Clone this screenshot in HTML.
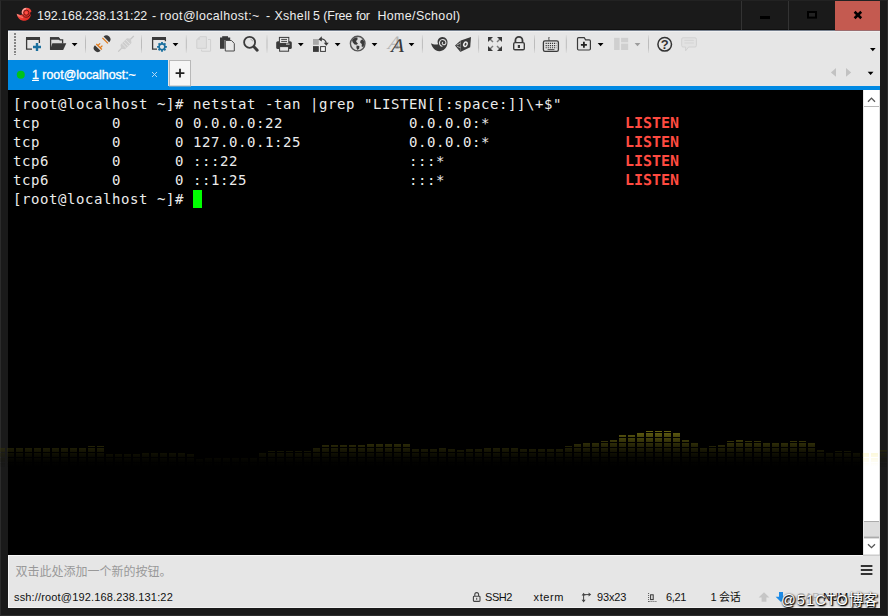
<!DOCTYPE html>
<html><head><meta charset="utf-8"><title>Xshell</title>
<style>
html,body{margin:0;padding:0;}
body{width:888px;height:616px;position:relative;overflow:hidden;background:#1a1a1a;font-family:"Liberation Sans","Noto Sans CJK SC",sans-serif;}
.abs{position:absolute;}
#frame{left:0;top:0;width:886px;height:614px;border:1px solid #2b2b2b;border-top-color:#222;}
#title i{font-style:normal}
#title i:nth-of-type(1){margin-left:.9px}#title i:nth-of-type(2){margin-left:-.3px}#title i:nth-of-type(3){margin-left:2.6px}#title i:nth-of-type(5){margin-left:-1.2px}#title i:nth-of-type(6){margin-left:-.8px;letter-spacing:-.2px}#title i:nth-of-type(7){margin-left:0.3px;letter-spacing:-.3px}#title i:nth-of-type(8){margin-left:4px}
#title .ls{letter-spacing:0.38px}
#title{left:37px;top:8px;height:16px;line-height:16px;font-size:12.4px;color:#ededed;white-space:nowrap;}
.wbtn{top:1px;height:29px;}
#client{left:8px;top:30px;width:872px;height:578px;background:#e6e6e6;}
#toolbar{left:8px;top:30px;width:872px;height:30px;background:#e6e6e6;}
#tabbar{left:8px;top:60px;width:872px;height:30px;background:#e6e6e6;}
#tab{left:8px;top:60px;width:160px;height:30px;background:#0089e3;}
#tabline{left:8px;top:86px;width:872px;height:4px;background:#0089e3;}
#tabtxt{left:32px;top:67px;font-size:12.4px;line-height:16px;color:#fff;white-space:nowrap;-webkit-text-stroke:0.35px #fff;letter-spacing:0}
#term{left:8px;top:90px;width:855px;height:465px;background:#000;}
#tt{left:13px;top:95px;font-family:"DejaVu Sans Mono","Liberation Mono",monospace;font-size:14px;line-height:19px;color:#ececec;white-space:pre;letter-spacing:0.5713px;margin:0;}
#tt b{color:#ff4a40;font-weight:bold;font-size:15px;letter-spacing:-0.03px;display:inline-block;width:54px;height:19px;line-height:19px;vertical-align:top;text-rendering:geometricPrecision;}
#cursor{left:193px;top:190px;width:9px;height:18px;background:#00ff00;}
#sb{left:863px;top:90px;width:17px;height:465px;background:#fff;}
#hint{left:15.6px;top:564px;font-size:12px;line-height:16px;color:#999;white-space:nowrap;}
#wm{left:781px;top:589.5px;font-size:14.5px;line-height:20px;color:#fff;white-space:nowrap;font-family:"Liberation Sans","Noto Sans CJK SC",sans-serif;text-shadow:1px 1px 1px #000,1px 1px 2px #222,0 0 2px #555;}
#wm span{letter-spacing:1.1px}
.st{top:589px;font-size:11px;line-height:16px;color:#111;white-space:nowrap;}
</style></head><body>
<div id="frame" class="abs"></div>
<div id="title" class="abs"><span>192.168.238.131:22</span><span class="ls"> <i>-</i> <i>root@localhost:~</i> <i>-</i> <i>Xshell</i> <i>5</i> <i>(Free</i> <i>for</i> <i>Home/School)</i></span></div>
<div id="client" class="abs"></div>
<div id="toolbar" class="abs"></div>
<div id="tabbar" class="abs"></div>
<div class="abs" style="left:8px;top:29px;width:827px;height:1px;background:#101010"></div>
<div class="abs" style="left:8px;top:30px;width:872px;height:1px;background:#76808e"></div>
<div class="abs" style="left:8px;top:31px;width:872px;height:1px;background:#f0f0f0"></div>
<div class="abs" style="left:8px;top:31px;width:1px;height:29px;background:#f2f2f2"></div>
<div class="abs" style="left:8px;top:555px;width:855px;height:1px;background:#f8f8f8"></div>
<div class="abs" style="left:8px;top:555px;width:1px;height:53px;background:#f6f6f6"></div>
<div class="abs" style="left:8px;top:607px;width:872px;height:1px;background:#f2f2f2"></div>
<div id="tab" class="abs"></div>
<div id="tabline" class="abs"></div>
<div id="tabtxt" class="abs"><u>1</u> root@localhost:~</div>
<div id="term" class="abs"></div>
<pre id="tt" class="abs">[root@localhost ~]# netstat -tan |grep "LISTEN[[:space:]]\+$"
tcp        0      0 0.0.0.0:22              0.0.0.0:*               <b>LISTEN</b>     
tcp        0      0 127.0.0.1:25            0.0.0.0:*               <b>LISTEN</b>     
tcp6       0      0 :::22                   :::*                    <b>LISTEN</b>     
tcp6       0      0 ::1:25                  :::*                    <b>LISTEN</b>     
[root@localhost ~]# </pre>
<div id="cursor" class="abs"></div>
<div id="sb" class="abs"></div>
<svg class="abs" style="left:0;top:0" width="888" height="616" viewBox="0 0 888 616">
<defs><linearGradient id="sepg" x1="0" y1="0" x2="0" y2="1"><stop offset="0" stop-color="#bdbdbd" stop-opacity="0.2"/><stop offset="0.3" stop-color="#bcbcbc"/><stop offset="0.7" stop-color="#bcbcbc"/><stop offset="1" stop-color="#bdbdbd" stop-opacity="0.2"/></linearGradient></defs>
<g><defs><linearGradient id="aig" x1="0" y1="0" x2="1" y2="1"><stop offset="0" stop-color="#ffc4bc"/><stop offset="0.45" stop-color="#f4443a"/><stop offset="1" stop-color="#d81e18"/></linearGradient></defs>
<path d="M16.6 13.8C18.6 15 21 15.2 22.4 14.6C20.6 11.4 22.6 7.8 26.4 7.7C29.2 7.7 31 9.4 31.5 11.6L30.2 12.8C31.2 14.6 30.8 17 29 18.8C27.2 20.6 24.6 21.2 22.2 20.6C19.4 19.8 17.4 17.2 16.6 13.8z" fill="url(#aig)"/>
<path d="M30.6 12.6C30.4 15.4 28.4 17.4 25.8 17.2C23.6 17 22.4 15.4 22.6 13.4" fill="none" stroke="#3a0806" stroke-width="0.9" opacity="0.85"/>
<circle cx="26.3" cy="12.7" r="2.6" fill="#ee3a30" stroke="#4a0a08" stroke-width="0.8" opacity="0.9"/>
<circle cx="26.3" cy="12.9" r="1.3" fill="#ff5248"/><path d="M22.7 14.2C21.6 11.6 23.2 8.9 26 8.5" fill="none" stroke="#ffb4ac" stroke-width="1.3" opacity="0.8"/><path d="M17.4 14.6C19 16.2 21 17.2 23 17.6" fill="none" stroke="#ff9a90" stroke-width="1.2" opacity="0.6"/></g><rect x="741" y="1" width="1" height="29" fill="#333"/><rect x="788" y="1" width="1" height="29" fill="#333"/>
<rect x="835" y="1" width="45" height="29.5" fill="#c45a50"/>
<rect x="760" y="16" width="10" height="3" fill="#000"/>
<rect x="808" y="12" width="8" height="5.6" fill="#222" stroke="#000" stroke-width="2"/>
<path d="M854.6 11.8L861.2 18.2M861.2 11.8L854.6 18.2" stroke="#000" stroke-width="2.6"/>
<path d="M15 33v22" stroke="#858585" stroke-width="2" stroke-dasharray="2 1"/>
<path d="M26.6 38.5V49.2H32M39.4 38.5V43" fill="none" stroke="#3a3a3a" stroke-width="1.3"/><rect x="26" y="37" width="14" height="3" fill="#3a3a3a"/>
<path d="M33 47h8M37 43v8" stroke="#1a6f9e" stroke-width="2.4"/>
<path d="M50.6 49.8V37.9H58.6L60 39.9H62.6V43.4" fill="#ddd" stroke="#3a3a3a" stroke-width="1.3"/><path d="M52.4 43.2H66.3L63.2 50H50z" fill="#3a3a3a"/><path d="M50 37.3H58.6L60.2 39.7H50z" fill="#3a3a3a"/>
<path d="M71.69999999999999 43h5.8l-2.9 3.3z" fill="#000"/>
<rect x="85.0" y="35" width="1" height="18" fill="url(#sepg)"/>
<g transform="translate(102 43.8) rotate(-45)"><path d="M-6 -4A4 4 0 0 0 -6 4z" fill="#3a3a3a"/><path d="M6.2 -4A4 4 0 0 1 6.2 4z" fill="#3a3a3a"/><path d="M-4.1 -3.9V3.9M4.5 -3.9V3.9M-4.1 -1.6H-1M-4.1 1.6H-1" stroke="#e07a1a" stroke-width="1.3" fill="none"/></g>
<g transform="translate(126 43.8) rotate(-45)"><path d="M-11 0H11" stroke="#c6c6c6" stroke-width="1.2"/><path d="M-7 0L-4.5 -3.2H4.5L7 0L4.5 3.2H-4.5z" fill="#cdcdcd"/><path d="M-2.6 -3.2V3.2M0 -3.2V3.2M2.6 -3.2V3.2" stroke="#e4e4e4" stroke-width="0.9"/></g>
<rect x="141.0" y="35" width="1" height="18" fill="url(#sepg)"/>
<path d="M152.6 38.5V49.2H157M165.4 38.5V41.3" fill="none" stroke="#3a3a3a" stroke-width="1.3"/><rect x="152" y="37" width="14" height="3" fill="#3a3a3a"/>
<path d="M165.00 46.80L166.90 46.80M164.12 48.92L165.46 50.26M162.00 49.80L162.00 51.70M159.88 48.92L158.54 50.26M159.00 46.80L157.10 46.80M159.88 44.68L158.54 43.34M162.00 43.80L162.00 41.90M164.12 44.68L165.46 43.34" stroke="#1a6f9e" stroke-width="1.8"/><circle cx="162" cy="46.8" r="2.9" fill="none" stroke="#1a6f9e" stroke-width="1.6"/>
<path d="M172.6 43h5.8l-2.9 3.3z" fill="#000"/>
<rect x="185.8" y="35" width="1" height="18" fill="url(#sepg)"/>
<path d="M199.8 36.7H206.4V48.3H196.8V39.7z" fill="#e0e0e0" stroke="#d0d0d0" stroke-width="1"/><path d="M199.8 36.7V39.7H196.8z" fill="#d0d0d0"/><path d="M208 39.5H210.6V51.2H201.6V49.6" fill="none" stroke="#d0d0d0" stroke-width="1"/>
<path d="M220 37.4H230.2V40H224.6V48.8H220z" fill="#3a3a3a"/><rect x="222.2" y="36.2" width="5.8" height="2.2" fill="#3a3a3a"/><path d="M225.3 40.5H231.4L234.3 43.4V51H225.3z" fill="#e8e8e8" stroke="#4a4a4a" stroke-width="1"/>
<circle cx="249.6" cy="42.3" r="5.5" fill="#e4e4e4" stroke="#3a3a3a" stroke-width="1.8"/><path d="M254.4 47.2L257.2 50.2" stroke="#3a3a3a" stroke-width="2.9" stroke-linecap="round"/><path d="M250.4 39.2A3.2 3.2 0 0 1 252.8 41.4" stroke="#999" stroke-width="0.8" fill="none"/>
<rect x="266.5" y="35" width="1" height="18" fill="url(#sepg)"/>
<rect x="276.2" y="41.2" width="15.6" height="7.8" rx="1.6" fill="#3a3a3a"/><rect x="279.4" y="37.4" width="9.4" height="6" fill="#e8e8e8" stroke="#3a3a3a" stroke-width="1"/><path d="M281.2 39.4H287M281.2 41.4H287" stroke="#444" stroke-width="1"/><rect x="279.6" y="46.6" width="9" height="4.6" fill="#e6e6e6" stroke="#3a3a3a" stroke-width="1"/><rect x="286" y="43.6" width="3.6" height="1" fill="#ddd"/>
<path d="M297.90000000000003 43h5.8l-2.9 3.3z" fill="#000"/>
<rect x="313" y="39" width="5.8" height="5.8" fill="#a9a9a9"/><rect x="313" y="46.1" width="5.8" height="5.8" fill="#3a3a3a"/><rect x="320.6" y="46.6" width="4.8" height="4.8" fill="#f4f4f4" stroke="#3a3a3a" stroke-width="1"/>
<path d="M320.6 38.9A5.4 5.4 0 0 1 326.3 43.6" fill="none" stroke="#3a3a3a" stroke-width="1.3"/><path d="M318.4 39.6L321.8 36.2V41.4z" fill="#3a3a3a"/><path d="M323.8 42.8H328.8L326.3 45.8z" fill="#3a3a3a"/>
<path d="M334.70000000000005 43h5.8l-2.9 3.3z" fill="#000"/>
<circle cx="357.7" cy="43.6" r="7.3" fill="#dcdcdc" stroke="#555" stroke-width="1.4"/><path d="M353 39L355.4 37.4L357.6 37.6L357.4 39.8L356 41L356.8 42.6L358 43.4L356.6 44.8L354.6 44.4L352.8 42.4L352 40.6zM356.6 45.6L359.4 46L359.2 48.4L357.6 50L356.4 48zM360.4 40.8L362.4 39.2L364.2 41.4L364.4 44.6L363.2 47L361.6 46.4L361.8 44L360.2 42.8z" fill="#3a3a3a"/>
<path d="M371.6 43h5.8l-2.9 3.3z" fill="#000"/>
<text transform="translate(387.4 48.8) skewX(-12)" font-family="Liberation Serif,serif" font-style="italic" font-size="19" fill="#b4b4b4">A</text><text transform="translate(391 51.9) skewX(-4) scale(1.08 1)" font-family="Liberation Serif,serif" font-style="italic" font-size="19.5" fill="#383838">A</text>
<path d="M408.6 43h5.8l-2.9 3.3z" fill="#000"/>
<rect x="421.9" y="35" width="1" height="18" fill="url(#sepg)"/>
<path d="M431 43.2C433 44.6 436 45 438.2 44.2C436.6 41 438.4 37.2 442.4 37C446 37 448 40 447.4 43.6C446.8 48.4 443 51.4 439.2 51.2C435 51 432 47.4 431 43.2z" fill="#3a3a3a"/><path d="M442.4 46.4C439.6 46 438.8 43 440 41C441.4 38.8 445 39.2 445.8 41.8C446.4 43.6 445 45 443.4 44.6C442 44.2 441.8 42.6 443 42.2" fill="none" stroke="#e0e0e0" stroke-width="1.1"/>
<path d="M460.8 40.6L471 37L470.2 47.2L460.2 52z" fill="#3a3a3a"/><path d="M455 45.4L460.6 40.6L460.2 51.8z" fill="#3a3a3a"/><path d="M456.6 45.2L460.4 43.2M457 46.4L460.4 47.6" fill="none" stroke="#d8d8d8" stroke-width="0.7"/><ellipse cx="465.4" cy="44.3" rx="2.3" ry="3" fill="#ececec" transform="rotate(25 465.4 44.3)"/><ellipse cx="465.5" cy="44.3" rx="0.9" ry="1.5" fill="#3a3a3a" transform="rotate(25 465.5 44.3)"/>
<rect x="478.1" y="35" width="1" height="18" fill="url(#sepg)"/>
<path d="M493.0 42.0L490.0 39.0" stroke="#7a7a7a" stroke-width="1.5"/><path d="M488 37H493L488 42z" fill="#383838"/><path d="M497.0 42.0L500.0 39.0" stroke="#7a7a7a" stroke-width="1.5"/><path d="M502 37H497L502 42z" fill="#383838"/><path d="M493.0 46.0L490.0 49.0" stroke="#7a7a7a" stroke-width="1.5"/><path d="M488 51H493L488 46z" fill="#383838"/><path d="M497.0 46.0L500.0 49.0" stroke="#7a7a7a" stroke-width="1.5"/><path d="M502 51H497L502 46z" fill="#383838"/>
<path d="M515.4 42.6V40.5A3.55 3.7 0 0 1 522.5 40.5V42.6" fill="none" stroke="#3a3a3a" stroke-width="1.8"/><rect x="513.7" y="42.6" width="10.6" height="7.2" rx="1.3" fill="#e8e8e8" stroke="#3a3a3a" stroke-width="1.4"/><rect x="517.8" y="45" width="2.2" height="3" fill="#3a3a3a"/>
<rect x="534.0" y="35" width="1" height="18" fill="url(#sepg)"/>
<rect x="543.4" y="40.9" width="15" height="10.4" rx="1.6" fill="#e2e2e2" stroke="#3a3a3a" stroke-width="1.3"/><path d="M545.6 43.4H556.4M545.6 45.6H556.4M545.6 47.8H556.4" stroke="#3a3a3a" stroke-width="1.1" stroke-dasharray="1.2 0.9"/><path d="M547.6 49.6H554.4" stroke="#3a3a3a" stroke-width="0.9"/><path d="M549 40.6C549 39 548.4 38.4 549.2 37" stroke="#3a3a3a" stroke-width="1" fill="none"/>
<rect x="565.8" y="35" width="1" height="18" fill="url(#sepg)"/>
<path d="M578.6 37.7H584.2L585.6 39.8H589.2Q590.4 39.8 590.4 41V48.8Q590.4 50 589.2 50H578.6Q577.5 50 577.5 48.8V38.8Q577.5 37.7 578.6 37.7z" fill="#e4e4e4" stroke="#3a3a3a" stroke-width="1.2"/><path d="M580.9 44.8H586.9M583.9 41.8V47.8" stroke="#222" stroke-width="1.8"/>
<path d="M597.7 43h5.8l-2.9 3.3z" fill="#000"/>
<rect x="614.1" y="37.8" width="5.5" height="12.2" fill="#cfcfcf"/><rect x="621.1" y="37.8" width="7.1" height="4.5" fill="#cfcfcf"/><rect x="621.1" y="43.6" width="7.1" height="6.4" fill="#cfcfcf"/>
<path d="M634.6 43h5.8l-2.9 3.3z" fill="#9c9c9c"/>
<rect x="648.0" y="35" width="1" height="18" fill="url(#sepg)"/>
<circle cx="664.7" cy="44.3" r="6.8" fill="none" stroke="#333" stroke-width="1.5"/><text x="664.7" y="49" text-anchor="middle" font-family="Liberation Sans,sans-serif" font-weight="bold" font-size="13" fill="#333">?</text>
<path d="M683 37.8H695Q696.4 37.8 696.4 39.2V45.6Q696.4 47 695 47H688.6L685.6 50.8V47H683Q681.7 47 681.7 45.6V39.2Q681.7 37.8 683 37.8z" fill="#e2e2e2" stroke="#d2d2d2" stroke-width="1"/><path d="M684.4 40.4H693.8M684.4 43H693.8" stroke="#d2d2d2" stroke-width="0.9"/>
<path d="M870 48h5.6l-2.8 3.3z" fill="#000"/><path d="M867.7 71.8h5.8l-2.9 3.3z" fill="#000"/>
<path d="M836 68V76.8L830.9 72.4z" fill="#c2c2c2"/><path d="M846 68V76.8L851.2 72.4z" fill="#c2c2c2"/>
<circle cx="20.8" cy="74.8" r="4" fill="#00c21a"/>
<path d="M152 72L157 77M157 72L152 77" stroke="#b4d8f4" stroke-width="1"/>
<rect x="169.5" y="60.5" width="21" height="25.5" fill="#f6f6f6" stroke="#b8b8b8" stroke-width="1"/><path d="M175.6 73.2H184.4M180 68.8V77.6" stroke="#222" stroke-width="1.8"/>
<rect x="863" y="90" width="1" height="465" fill="#e8e8e8"/><rect x="879" y="90" width="1" height="465" fill="#ddd"/>
<path d="M868 101.7L871.5 98.1L875 101.7" fill="none" stroke="#555" stroke-width="1.3"/><rect x="864" y="106" width="15" height="1" fill="#b8b8b8"/>
<rect x="864" y="521" width="15" height="17.4" fill="#ababab"/><rect x="864" y="522" width="15" height="14.6" fill="#dddddd"/>
<path d="M868 544.3L871.5 547.7L875 544.3" fill="none" stroke="#555" stroke-width="1.3"/><rect x="863" y="554.6" width="17" height="1" fill="#bbb"/>
<path d="M860.8 566H872.4M860.8 570H872.4M860.8 574H872.4" stroke="#333" stroke-width="2"/>
<path d="M474.8 596V594.6A1.9 2 0 0 1 478.6 594.6V596" fill="none" stroke="#444" stroke-width="1.1"/><rect x="473.4" y="596.2" width="6.6" height="5.2" rx="0.8" fill="none" stroke="#444" stroke-width="1.1"/><rect x="476.2" y="597.8" width="1" height="2" fill="#444"/>
<path d="M583.6 594V601M583.6 594.6H589.6" stroke="#444" stroke-width="1" fill="none"/><path d="M581.6 595.4L583.6 592.8L585.6 595.4zM581.6 599.8L583.6 602.4L585.6 599.8zM588.6 592.6L591.2 594.6L588.6 596.6z" fill="#444"/>
<path d="M648.6 593V602M648.6 601.5H657" stroke="#555" stroke-width="1" stroke-dasharray="1 1" fill="none"/><rect x="650.6" y="594.8" width="2.6" height="4.8" fill="none" stroke="#333" stroke-width="1"/>
<path d="M764 592.2L769.4 597.4H766.4V601.8H761.6V597.4H758.6z" fill="#c6c6c6"/><path d="M781 602L775.6 596.8H779V592H783V596.8H786.4z" fill="#1e8be6"/>
</svg>
<svg class="abs" style="left:0;top:0" width="888" height="616" viewBox="0 0 888 616">
<defs><linearGradient id="eqg" gradientUnits="userSpaceOnUse" x1="0" y1="430" x2="0" y2="468"><stop offset="0" stop-color="#6c6812"/><stop offset="1" stop-color="#000" stop-opacity="0"/></linearGradient>
<linearGradient id="eqg2" gradientUnits="userSpaceOnUse" x1="0" y1="440" x2="0" y2="466"><stop offset="0" stop-color="#f0e060"/><stop offset="1" stop-color="#f0e060" stop-opacity="0"/></linearGradient>
<pattern id="eqp" patternUnits="userSpaceOnUse" x="0" y="433" width="888" height="5"><rect x="0" y="0" width="888" height="4" fill="#fff"/></pattern>
<mask id="eqm" maskUnits="userSpaceOnUse" x="0" y="425" width="888" height="50"><rect x="0" y="425" width="888" height="50" fill="url(#eqp)"/></mask>
<clipPath id="eqdark"><rect x="0" y="420" width="863" height="60"/><rect x="880" y="420" width="8" height="60"/></clipPath>
<clipPath id="eqlight"><rect x="863" y="420" width="17" height="60"/></clipPath></defs>
<g clip-path="url(#eqdark)"><path d="M-2 448h7V472h-7zM7 448h7V472h-7zM16 448h7V472h-7zM25 448h7V472h-7zM34 448h7V472h-7zM43 448h7V472h-7zM52 448h7V472h-7zM61 448h7V472h-7zM70 448h7V472h-7zM79 448h7V472h-7zM88 448h7V472h-7zM97 448h7V472h-7zM106 454h7V472h-7zM115 454h7V472h-7zM124 454h7V472h-7zM133 454h7V472h-7zM142 453h7V472h-7zM151 453h7V472h-7zM160 453h7V472h-7zM169 453h7V472h-7zM178 453h7V472h-7zM187 454h7V472h-7zM196 459h7V472h-7zM205 458h7V472h-7zM214 458h7V472h-7zM223 458h7V472h-7zM232 458h7V472h-7zM241 458h7V472h-7zM250 458h7V472h-7zM259 453h7V472h-7zM268 453h7V472h-7zM277 453h7V472h-7zM286 453h7V472h-7zM295 453h7V472h-7zM304 453h7V472h-7zM313 448h7V472h-7zM322 445h7V472h-7zM331 445h7V472h-7zM340 445h7V472h-7zM349 445h7V472h-7zM358 445h7V472h-7zM367 444h7V472h-7zM376 444h7V472h-7zM385 444h7V472h-7zM394 444h7V472h-7zM403 444h7V472h-7zM412 449h7V472h-7zM421 449h7V472h-7zM430 449h7V472h-7zM439 448h7V472h-7zM448 449h7V472h-7zM457 450h7V472h-7zM466 449h7V472h-7zM475 449h7V472h-7zM484 448h7V472h-7zM493 448h7V472h-7zM502 448h7V472h-7zM511 448h7V472h-7zM520 449h7V472h-7zM529 449h7V472h-7zM538 449h7V472h-7zM547 449h7V472h-7zM556 449h7V472h-7zM565 448h7V472h-7zM574 444h7V472h-7zM583 443h7V472h-7zM592 443h7V472h-7zM601 443h7V472h-7zM610 440h7V472h-7zM619 435h7V472h-7zM628 435h7V472h-7zM637 433h7V472h-7zM646 433h7V472h-7zM655 433h7V472h-7zM664 433h7V472h-7zM673 433h7V472h-7zM682 440h7V472h-7zM691 443h7V472h-7zM700 448h7V472h-7zM709 448h7V472h-7zM718 445h7V472h-7zM727 443h7V472h-7zM736 440h7V472h-7zM745 443h7V472h-7zM754 443h7V472h-7zM763 443h7V472h-7zM772 443h7V472h-7zM781 443h7V472h-7zM790 443h7V472h-7zM799 443h7V472h-7zM808 443h7V472h-7zM817 450h7V472h-7zM826 453h7V472h-7zM835 453h7V472h-7zM844 453h7V472h-7zM853 453h7V472h-7zM862 453h7V472h-7zM871 453h7V472h-7zM880 450h7V472h-7zM889 450h7V472h-7z" fill="url(#eqg)" mask="url(#eqm)"/><path d="M88 446h7v1h-7zM97 446h7v1h-7zM268 451h7v1h-7zM277 451h7v1h-7zM286 451h7v1h-7zM295 451h7v1h-7zM304 451h7v1h-7zM565 446h7v1h-7zM601 441h7v1h-7zM646 431h7v1h-7zM655 431h7v1h-7zM664 431h7v1h-7zM709 446h7v1h-7zM727 441h7v1h-7zM745 441h7v1h-7zM754 441h7v1h-7zM790 441h7v1h-7zM799 441h7v1h-7zM835 451h7v1h-7zM844 451h7v1h-7z" fill="url(#eqg)"/></g>
<g clip-path="url(#eqlight)" opacity="0.45"><path d="M-2 448h7V472h-7zM7 448h7V472h-7zM16 448h7V472h-7zM25 448h7V472h-7zM34 448h7V472h-7zM43 448h7V472h-7zM52 448h7V472h-7zM61 448h7V472h-7zM70 448h7V472h-7zM79 448h7V472h-7zM88 448h7V472h-7zM97 448h7V472h-7zM106 454h7V472h-7zM115 454h7V472h-7zM124 454h7V472h-7zM133 454h7V472h-7zM142 453h7V472h-7zM151 453h7V472h-7zM160 453h7V472h-7zM169 453h7V472h-7zM178 453h7V472h-7zM187 454h7V472h-7zM196 459h7V472h-7zM205 458h7V472h-7zM214 458h7V472h-7zM223 458h7V472h-7zM232 458h7V472h-7zM241 458h7V472h-7zM250 458h7V472h-7zM259 453h7V472h-7zM268 453h7V472h-7zM277 453h7V472h-7zM286 453h7V472h-7zM295 453h7V472h-7zM304 453h7V472h-7zM313 448h7V472h-7zM322 445h7V472h-7zM331 445h7V472h-7zM340 445h7V472h-7zM349 445h7V472h-7zM358 445h7V472h-7zM367 444h7V472h-7zM376 444h7V472h-7zM385 444h7V472h-7zM394 444h7V472h-7zM403 444h7V472h-7zM412 449h7V472h-7zM421 449h7V472h-7zM430 449h7V472h-7zM439 448h7V472h-7zM448 449h7V472h-7zM457 450h7V472h-7zM466 449h7V472h-7zM475 449h7V472h-7zM484 448h7V472h-7zM493 448h7V472h-7zM502 448h7V472h-7zM511 448h7V472h-7zM520 449h7V472h-7zM529 449h7V472h-7zM538 449h7V472h-7zM547 449h7V472h-7zM556 449h7V472h-7zM565 448h7V472h-7zM574 444h7V472h-7zM583 443h7V472h-7zM592 443h7V472h-7zM601 443h7V472h-7zM610 440h7V472h-7zM619 435h7V472h-7zM628 435h7V472h-7zM637 433h7V472h-7zM646 433h7V472h-7zM655 433h7V472h-7zM664 433h7V472h-7zM673 433h7V472h-7zM682 440h7V472h-7zM691 443h7V472h-7zM700 448h7V472h-7zM709 448h7V472h-7zM718 445h7V472h-7zM727 443h7V472h-7zM736 440h7V472h-7zM745 443h7V472h-7zM754 443h7V472h-7zM763 443h7V472h-7zM772 443h7V472h-7zM781 443h7V472h-7zM790 443h7V472h-7zM799 443h7V472h-7zM808 443h7V472h-7zM817 450h7V472h-7zM826 453h7V472h-7zM835 453h7V472h-7zM844 453h7V472h-7zM853 453h7V472h-7zM862 453h7V472h-7zM871 453h7V472h-7zM880 450h7V472h-7zM889 450h7V472h-7z" fill="url(#eqg2)" mask="url(#eqm)"/></g>
</svg>
<div id="hint" class="abs">双击此处添加一个新的按钮。</div>
<div class="abs st" style="left:14px;letter-spacing:0.16px">ssh://root@192.168.238.131:22</div>
<div class="abs st" style="left:485px;letter-spacing:-0.42px">SSH2</div>
<div class="abs st" style="left:533.6px;letter-spacing:0.58px">xterm</div>
<div class="abs st" style="left:597px;letter-spacing:-0.14px">93x23</div>
<div class="abs st" style="left:666px;letter-spacing:-0.35px">6,21</div>
<div class="abs st" style="left:710.4px;letter-spacing:-0.3px">1 会话</div>
<div class="abs st" style="left:797px;color:#b4b4b4">CAP</div>
<div class="abs st" style="left:823px">NUM</div>
<div id="wm" class="abs"><span>@51CTO</span>博客</div>
</body></html>
